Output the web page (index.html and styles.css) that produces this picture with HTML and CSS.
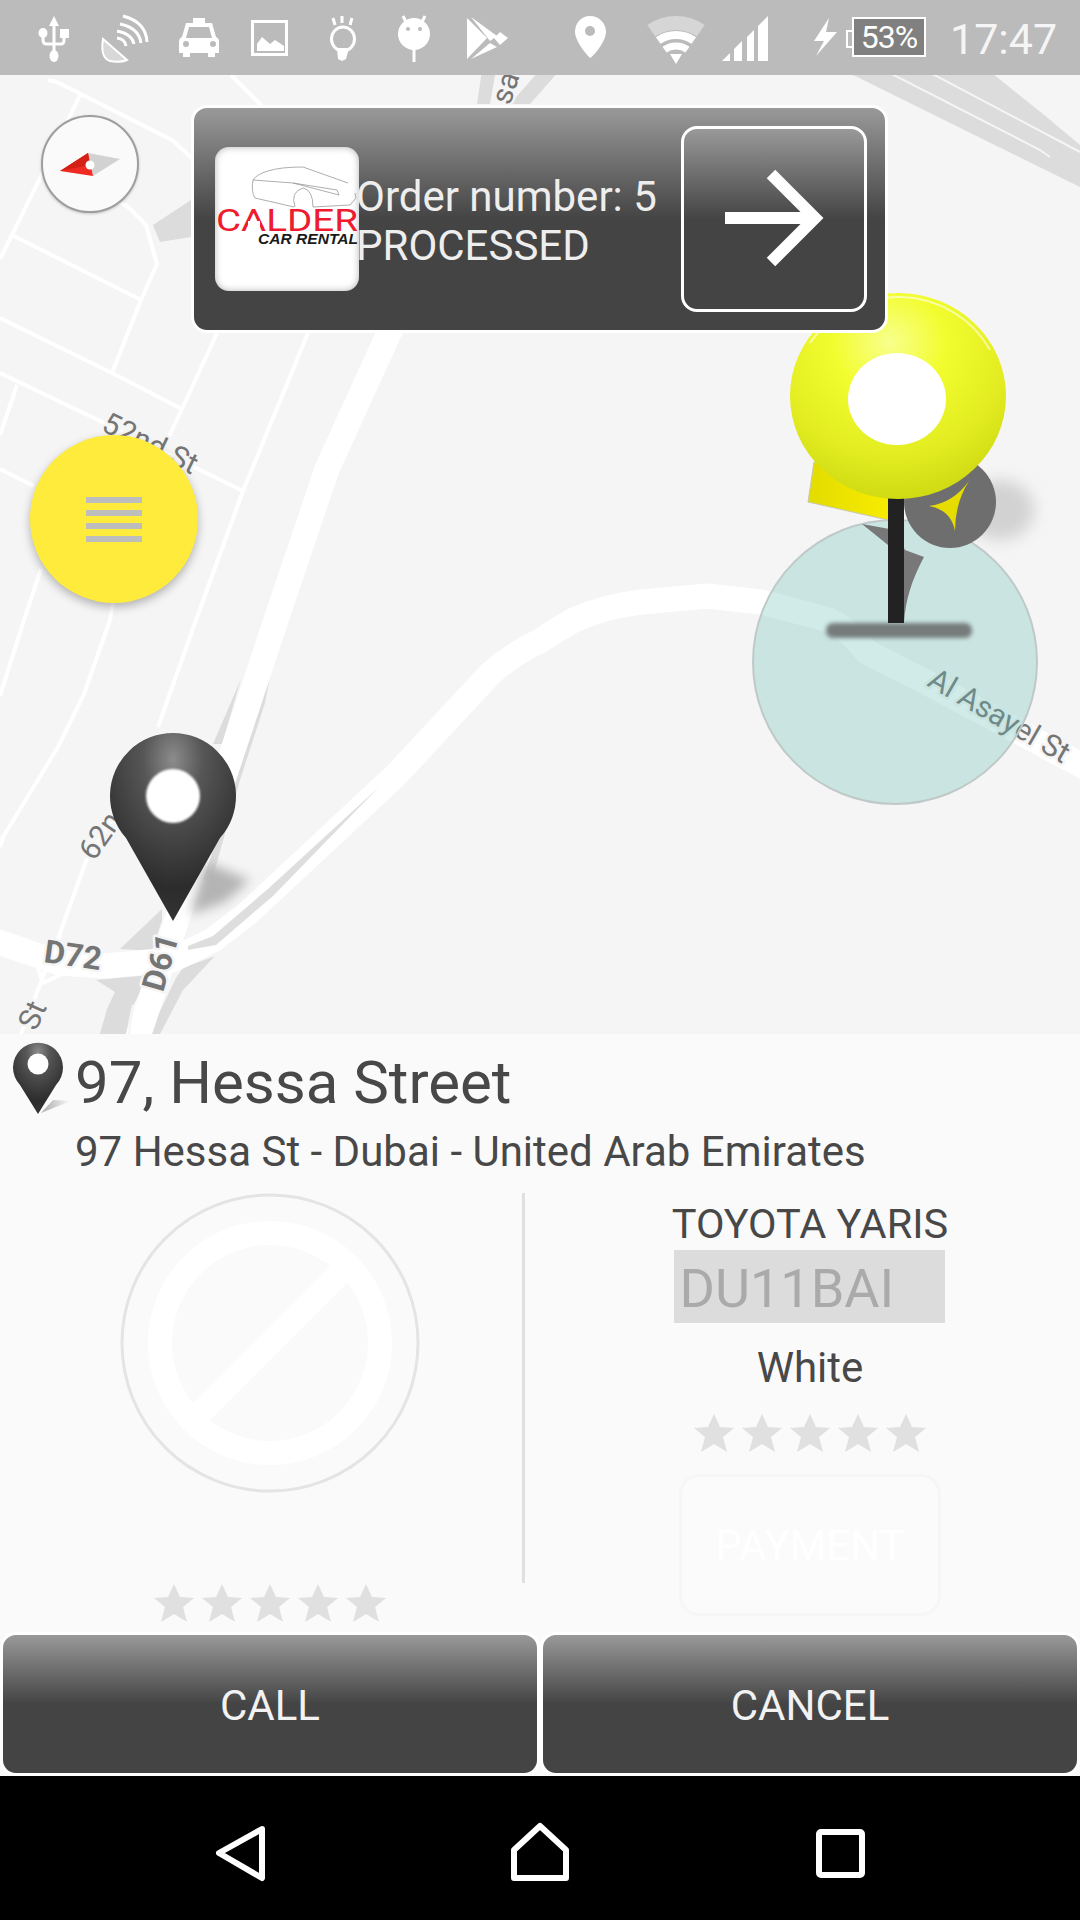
FILE: index.html
```html
<!DOCTYPE html>
<html lang="en">
<head>
<meta charset="utf-8">
<title>Order</title>
<link rel="stylesheet" href="styles.css">
</head>
<body>
<div class="app">
  <header class="status">
    <svg width="66" height="75" viewBox="30 0 66 75"><path class="wf" d="M54 16l5 10h-10z"/><path class="ws" d="M54 24V52M43 36V40Q43 44 47 44H61Q64 44 64 40V36"/><ellipse class="wf" cx="54" cy="56" rx="4.5" ry="6"/><ellipse class="wf" cx="43" cy="33" rx="4.5" ry="5"/><rect class="wf" x="60" y="29" width="9" height="9"/></svg>
    <svg width="76" height="75" viewBox="96 0 76 75"><path class="dish" d="M103 39Q100 58 110 61Q120 63 127 60Z"/><path class="ws" d="M123 16Q146 22 147 42M120 24Q139 28 141 43M117 31Q132 34 134 44M117 38Q125 39 126 46"/></svg>
    <svg width="73" height="75" viewBox="172 0 73 75"><path class="wf" d="M193 18H205V23H212L216 37Q219 38 219 42V53H215V57H208V53H190V57H183V53H179V42Q179 38 182 37L186 23H193Z"/><path class="gf" d="M189 27H209L212 38H186Z"/><circle class="gf" cx="186" cy="44" r="3"/><circle class="gf" cx="213" cy="44" r="3"/></svg>
    <svg width="79" height="75" viewBox="245 0 79 75"><rect class="wl" x="252.5" y="21.5" width="34" height="33"/><path class="wf" d="M257 50V44L262 37L270 44L275 40L284 46V51H257Z"/></svg>
    <svg width="68" height="75" viewBox="324 0 68 75"><path class="ws" d="M342 16V23M333 18L335 25M352 18L350 25"/><ellipse class="wl3" cx="343" cy="39" rx="11.5" ry="12"/><path class="wf" d="M337 48H349L346 59L342 61L338 59Z"/></svg>
    <svg width="68" height="75" viewBox="392 0 68 75"><path class="ws" d="M403 16L407 24M425 16L421 24M414 48V62"/><ellipse class="wf" cx="414" cy="34" rx="16" ry="16"/><circle class="gf" cx="408" cy="29" r="2"/><circle class="gf" cx="420" cy="29" r="2"/></svg>
    <svg width="108" height="75" viewBox="460 0 108 75"><path class="wf" d="M467 18L487 38L467 59ZM471 17L497 36L490 41ZM500 32L508 38L500 45L494 38ZM490 43L497 47L471 59Z"/></svg>
    <svg width="72" height="75" viewBox="568 0 72 75"><path class="wf" d="M590 16C599 16 606 23 606 32C606 40 596 54 590 58C584 52 575 40 575 32C575 23 581 16 590 16Z"/><circle class="gf" cx="590" cy="31" r="5"/></svg>
    <svg width="76" height="75" viewBox="640 0 76 75"><path class="wifi-back" d="M651.3 30.8A43 43 0 0 1 700.7 30.8"/><path class="wifi-a" d="M658.2 40.6A31 31 0 0 1 693.8 40.6"/><path class="wifi-b" d="M664.5 49.6A20 20 0 0 1 687.5 49.6"/><path class="wf" d="M670 54H682L676 64Z"/></svg>
    <svg width="92" height="75" viewBox="716 0 92 75"><path class="wf" d="M722 61L730 53V61ZM734 49V61H742V41ZM747 37V61H754V30ZM758 26V61H768V16Z"/></svg>
    <svg width="38" height="75" viewBox="808 0 38 75"><path class="wf" d="M829 18L814 41H824L816 56L837 32H826Z"/></svg>
    <div class="battery"><span>53%</span></div>
    <div class="clock">17:47</div>
  </header>

  <main class="map">
    <svg class="map-canvas" width="1080" height="959" viewBox="0 75 1080 959">
      <defs>
        <radialGradient id="pinGrad" cx="50%" cy="14%" r="85%">
          <stop offset="0" stop-color="#8c8c8c"/><stop offset=".28" stop-color="#565656"/><stop offset=".8" stop-color="#2c2c2c"/><stop offset="1" stop-color="#333"/>
        </radialGradient>
        <radialGradient id="ballGrad" cx="46%" cy="24%" r="85%">
          <stop offset="0" stop-color="#f8ff8c"/><stop offset=".3" stop-color="#f2fd30"/><stop offset=".65" stop-color="#e2ec20"/><stop offset="1" stop-color="#c8d30e"/>
        </radialGradient>
        <linearGradient id="flagGrad" x1="0" x2="1" y1="0" y2="0">
          <stop offset="0" stop-color="#e2dc00"/><stop offset="1" stop-color="#f8ec00"/>
        </linearGradient>
        <filter id="blur8" x="-50%" y="-50%" width="200%" height="200%"><feGaussianBlur stdDeviation="8"/></filter>
        <filter id="blur5" x="-50%" y="-50%" width="200%" height="200%"><feGaussianBlur stdDeviation="6"/></filter>
        <filter id="blur2" x="-20%" y="-100%" width="140%" height="300%"><feGaussianBlur stdDeviation="2"/></filter>
        <filter id="blur1" x="-30%" y="-30%" width="160%" height="160%"><feGaussianBlur stdDeviation="1.2"/></filter>
      </defs>

      <g class="tunnel">
        <polygon points="843,70 1080,187 1080,145 1043,114 988,70"/>
        <polygon points="153,225 191,200 191,237 160,242"/>
        <polygon points="477,104 482,70 496,70 490,104"/>
        <polygon points="510,104 540,70 560,70 530,104"/>
        <polygon points="270,677 265,703 240,780 212,880 200,880 240,745"/>
        <polygon points="241,679 213,744 222,744"/>
        <polygon points="120,949 162,909 162,920 152,951"/>
        <polygon points="100,1034 126,1034 131,1009 150,975 96,980 115,992 107,1009"/>
        <polygon points="149,1034 160,1034 183,990 215,956 183,968 176,978"/>
      </g>
      <path class="gap" d="M884 70L1040 150L1050 157M925 70L1080 152"/>

      <path class="street" d="M57 82L172 140L193 159M48 80L57 82M80 95L41 176L12 235L0 259M45 166L127 206L146 225L157 264L141 300L112 373M12 235L141 300M0 318L112 373L182 409M0 373L96 419L243 491M17 385L0 435M217 333L182 409L165 445M308 333L243 491L196 620L158 727M0 469L34 486M41 569L24 620L0 696M114 596L110 620L84 694L58 747L3 837L0 847M112 820L86 861L60 933L41 982L21 1034M60 933L56 955M38 968L43 983L60 975M231 75L262 106"/>
      <path class="road" d="M137 1040L276 620L327 469L389 333L420 270"/>
      <path class="road" d="M-10 939L59 963L103 966L172 960L213 940L248 913L396 775L490 674Q512 654 540 641Q556 630 574 620Q605 606 642 602L707 596L762 602L829 620Q850 630 867 652L926 682L1090 770"/>
      <polygon class="sliver" points="379,787 269,888 213,936 188,946 188,950 216,945 273,896"/>
      <path class="gap" d="M129 1034L133 1005"/>

      <text class="lbl" transform="translate(510 106) rotate(-72)">sa</text>
      <text class="lbl" transform="translate(100 430) rotate(26)">52nd St</text>
      <text class="lbl" transform="translate(94 862) rotate(-55)">62nd St</text>
      <text class="lbl-b" transform="translate(43 962) rotate(8)">D72</text>
      <text class="lbl-b" transform="translate(163 993) rotate(-74)">D61</text>
      <text class="lbl" transform="translate(36 1032) rotate(-66)">St</text>
      <text class="lbl" transform="translate(926 685) rotate(30)">Al Asayel St</text>

      <circle class="zone" cx="895" cy="662" r="142"/>

      <ellipse class="soft" cx="1000" cy="510" rx="34" ry="30" filter="url(#blur8)"/>
      <polygon class="flag" points="814,462 808,502 888,520 892,480"/>
      <circle class="ball-grey" cx="950" cy="502" r="46"/>
      <path class="spark" d="M969 481Q955 503 955 531Q951 510 929 506Q953 503 969 481Z"/>
      <path class="wedge" d="M862 524L888 545V622L904 622Q906 590 924 557L905 550L895 530Z"/>
      <rect class="base" x="826" y="623" width="146" height="15" rx="7" filter="url(#blur2)"/>
      <rect class="stick" x="888" y="495" width="16" height="128"/>
      <ellipse cx="898" cy="396" rx="108" ry="103" fill="url(#ballGrad)"/>
      <path class="rim" d="M810 343A104 99 0 0 1 990 350"/>
      <ellipse class="hole" cx="897" cy="399" rx="49" ry="46"/>

      <path class="pin-shadow" d="M205 862L250 880L225 902L190 915Z" filter="url(#blur5)"/>
      <path fill="url(#pinGrad)" d="M173 921L126 838A63 63 0 1 1 220 838Z"/>
      <circle class="hole" cx="173" cy="796" r="27" filter="url(#blur1)"/>
    </svg>

    <div class="compass">
      <svg width="60" height="26" viewBox="60 153 60 26"><polygon class="n-grey" points="88,153 120,159 93,176"/><polygon class="n-red" points="60,171 88,153 93,176"/><polygon class="n-red-dark" points="60,171 88,153 90,165"/><circle class="n-dot" cx="90" cy="165" r="4.5"/></svg>
    </div>

    <button class="fab"><span></span><span></span><span></span><span></span></button>

    <section class="banner">
      <div class="logo">
        <svg width="144" height="144" viewBox="215 147 144 144">
          <path class="car" d="M253 180Q257 174 268 171Q280 167 303 167L348 183M253 180Q251 192 255 198L294 207M253 180L293 183L337 190L339 195L293 183M295 207Q290 192 303 188Q313 190 313 207L350 205L356 198L355 193"/>
          <text class="brand" x="216" y="231" textLength="142" lengthAdjust="spacingAndGlyphs">CALDER</text>
          <rect class="brand-cut" x="248" y="221" width="12" height="7"/>
          <text class="brand-sub" x="258" y="244" textLength="100" lengthAdjust="spacingAndGlyphs">CAR RENTAL</text>
        </svg>
      </div>
      <div class="order"><div>Order number: 5</div><div>PROCESSED</div></div>
      <button class="go">
        <svg width="110" height="100" viewBox="720 170 110 100"><path class="arrow" d="M726 219H815M772 175L816 219L772 263"/></svg>
      </button>
    </section>
  </main>

  <section class="panel">
    <div class="place">
      <svg class="place-pin" width="64" height="80" viewBox="0 0 64 80">
        <defs><linearGradient id="sh" x1="0" x2="1"><stop offset="0" stop-color="#aaa"/><stop offset="1" stop-color="#fafafa"/></linearGradient></defs>
        <polygon points="28,73 40,60 58,61" fill="url(#sh)"/>
        <path fill="url(#pinGrad)" d="M25 74L7 45A25 25 0 1 1 43 45Z"/>
        <circle cx="25" cy="24" r="10.5" fill="#fff"/>
      </svg>
      <h1 class="title">97, Hessa Street</h1>
      <p class="addr">97 Hessa St - Dubai - United Arab Emirates</p>
    </div>

    <div class="details">
      <div class="driver">
        <svg width="300" height="300" viewBox="0 0 300 300"><circle class="av-ring" cx="150" cy="150" r="148"/><circle class="av-ban" cx="150" cy="150" r="110"/><path class="av-ban" d="M72 228L228 72"/></svg>
        <div class="stars driver-stars">
          <svg width="40" height="38" viewBox="0 0 40 38"><polygon points="20,0 26,13 40,14 29,23 33,38 20,30 7,38 11,23 0,14 14,13"/></svg>
          <svg width="40" height="38" viewBox="0 0 40 38"><polygon points="20,0 26,13 40,14 29,23 33,38 20,30 7,38 11,23 0,14 14,13"/></svg>
          <svg width="40" height="38" viewBox="0 0 40 38"><polygon points="20,0 26,13 40,14 29,23 33,38 20,30 7,38 11,23 0,14 14,13"/></svg>
          <svg width="40" height="38" viewBox="0 0 40 38"><polygon points="20,0 26,13 40,14 29,23 33,38 20,30 7,38 11,23 0,14 14,13"/></svg>
          <svg width="40" height="38" viewBox="0 0 40 38"><polygon points="20,0 26,13 40,14 29,23 33,38 20,30 7,38 11,23 0,14 14,13"/></svg>
        </div>
      </div>
      <div class="divider"></div>
      <div class="vehicle">
        <div class="model">TOYOTA YARIS</div>
        <div class="plate">DU11BAI</div>
        <div class="colour">White</div>
        <div class="stars vehicle-stars">
          <svg width="40" height="38" viewBox="0 0 40 38"><polygon points="20,0 26,13 40,14 29,23 33,38 20,30 7,38 11,23 0,14 14,13"/></svg>
          <svg width="40" height="38" viewBox="0 0 40 38"><polygon points="20,0 26,13 40,14 29,23 33,38 20,30 7,38 11,23 0,14 14,13"/></svg>
          <svg width="40" height="38" viewBox="0 0 40 38"><polygon points="20,0 26,13 40,14 29,23 33,38 20,30 7,38 11,23 0,14 14,13"/></svg>
          <svg width="40" height="38" viewBox="0 0 40 38"><polygon points="20,0 26,13 40,14 29,23 33,38 20,30 7,38 11,23 0,14 14,13"/></svg>
          <svg width="40" height="38" viewBox="0 0 40 38"><polygon points="20,0 26,13 40,14 29,23 33,38 20,30 7,38 11,23 0,14 14,13"/></svg>
        </div>
        <button class="payment">PAYMENT</button>
      </div>
    </div>

    <div class="actions">
      <button class="action">CALL</button>
      <button class="action">CANCEL</button>
    </div>
  </section>

  <nav class="navbar">
    <svg width="60" height="144" viewBox="210 1776 60 144"><path class="nav-ic" d="M262 1829L219 1853L262 1878Z"/></svg>
    <svg width="60" height="144" viewBox="510 1776 60 144"><path class="nav-ic" d="M540 1826L514 1850V1878H566V1850Z"/></svg>
    <svg width="60" height="144" viewBox="810 1776 60 144"><rect class="nav-ic" x="819" y="1832" width="43" height="43" rx="2"/></svg>
  </nav>
</div>
</body>
</html>
```
FILE: styles.css
```css
* { box-sizing: border-box; }
html, body { margin: 0; padding: 0; }
body { font-family: Roboto, "Liberation Sans", sans-serif; background: #000; }
button { font-family: inherit; padding: 0; cursor: pointer; }
.app { width: 1080px; height: 1920px; display: flex; flex-direction: column; overflow: hidden; }

/* status bar */
.status { flex: 0 0 75px; background: #bbb; display: flex; padding-left: 30px; }
.status svg { display: block; flex: none; }
.wf { fill: #fff; }
.gf { fill: #bbb; }
.ws { fill: none; stroke: #fff; stroke-width: 3; }
.wl { fill: none; stroke: #fff; stroke-width: 3; }
.wl3 { fill: none; stroke: #fff; stroke-width: 3; }
.dish { fill: #d8d8d8; stroke: #fff; stroke-width: 2; }
.wifi-back { fill: none; stroke: #d6d6d6; stroke-width: 14; }
.wifi-a { fill: none; stroke: #fff; stroke-width: 8; }
.wifi-b { fill: none; stroke: #fff; stroke-width: 7; }
.battery { position: relative; flex: none; width: 74px; height: 40px; margin: 17px 0 0 6px; background: #808080; border: 2px solid #fff; color: #fff; font-size: 32px; line-height: 37px; text-align: center; letter-spacing: -1px; }
.battery::before { content: ""; position: absolute; left: -8px; top: 11px; width: 6px; height: 14px; border: 2px solid #fff; border-right: 0; }
.clock { margin: 14px 0 0 24px; color: #f5f5f5; font-size: 43px; line-height: 50px; white-space: nowrap; }

/* map */
.map { position: relative; flex: 0 0 959px; background: #f5f5f5; overflow: hidden; }
.map-canvas { display: block; }
.tunnel polygon { fill: #dcdcdc; }
.gap { fill: none; stroke: #f5f5f5; stroke-width: 2; }
.sliver { fill: #dedede; }
.street { fill: none; stroke: #fff; stroke-width: 4; stroke-linejoin: round; }
.road { fill: none; stroke: #fff; stroke-width: 25; stroke-linejoin: round; }
.lbl, .lbl-b { paint-order: stroke; stroke: #f5f5f5; stroke-width: 5px; stroke-linejoin: round; fill: #757575; font-family: Roboto, sans-serif; }
.lbl { font-size: 30px; }
.lbl-b { font-size: 32px; font-weight: 700; }
.zone { fill: rgb(98, 188, 178); fill-opacity: .3; stroke: #bfc9c7; stroke-width: 2; }
.soft { fill: #d2d2d2; }
.pin-shadow { fill: #b4b4b4; }
.flag { fill: url(#flagGrad); stroke: #c8c8b0; stroke-width: 1; }
.ball-grey { fill: #6e6e6e; }
.spark { fill: #e6dc00; }
.wedge { fill: #787878; }
.base { fill: #767c7c; }
.stick { fill: #222; }
.hole { fill: #fff; }
.rim { fill: none; stroke: #fff; stroke-opacity: .55; stroke-width: 2; }

.compass { position: absolute; left: 41px; top: 40px; width: 98px; height: 98px; border-radius: 50%; background: #fafafa; border: 2px solid #9e9e9e; box-shadow: 0 1px 3px rgba(0,0,0,.2); display: flex; align-items: center; justify-content: center; }
.compass svg { display: block; margin: 3px 0 0 0; }
.n-red { fill: #ee2a22; }
.n-red-dark { fill: #d42015; }
.n-grey { fill: #d2d2d2; }
.n-dot { fill: #fff; }

.fab { position: absolute; left: 30px; top: 360px; width: 168px; height: 168px; border: 0; border-radius: 50%; background: #ffeb3b; box-shadow: 0 4px 10px rgba(0,0,0,.28); display: flex; flex-direction: column; align-items: center; justify-content: center; gap: 7px; }
.fab span { display: block; width: 56px; height: 6px; background: #bdbdbd; }

.banner { position: absolute; left: 191px; top: 30px; width: 697px; height: 228px; border: 3px solid #fff; border-radius: 16px; background: linear-gradient(#999, #444 50%, #444); display: flex; align-items: flex-start; }
.logo { flex: none; width: 144px; height: 144px; margin: 39px 0 0 21px; border-radius: 14px; background: #fff; box-shadow: inset 0 0 7px rgba(0,0,0,.3); }
.logo svg { display: block; overflow: visible; }
.car { fill: none; stroke: #999; stroke-width: .8; }
.brand { font-family: Roboto, sans-serif; font-size: 32px; fill: #ed1c2e; }
.brand-cut { fill: #fff; }
.brand-sub { font-family: "Liberation Sans", sans-serif; font-size: 14px; font-weight: 700; font-style: italic; fill: #1a1a1a; }
.order { margin: 64px 0 0 -3px; color: #eee; font-size: 42px; line-height: 49px; white-space: nowrap; }
.go { margin: 18px 18px 0 auto; flex: none; width: 186px; height: 186px; border: 3px solid #fff; border-radius: 16px; background: linear-gradient(#999, #444 50%, #444); display: flex; align-items: center; justify-content: center; }
.arrow { fill: none; stroke: #fff; stroke-width: 12; }

/* panel */
.panel { flex: 0 0 742px; background: #fafafa; display: flex; flex-direction: column; }
.place { display: grid; grid-template-columns: 75px 1fr; }
.place-pin { grid-row: 1 / span 2; display: block; margin: 6px 0 0 13px; overflow: visible; }
.title { margin: 16px 0 0; font-size: 60px; line-height: 66px; font-weight: 400; color: #484848; white-space: nowrap; }
.addr { margin: 12px 0 0; font-size: 42px; line-height: 48px; color: #484848; white-space: nowrap; }
.details { flex: 1; margin-top: 17px; display: flex; align-items: flex-start; }
.driver { flex: none; width: 522px; padding-left: 18px; display: flex; flex-direction: column; align-items: center; }
.driver > svg { display: block; }
.av-ring { fill: none; stroke: #e4e4e4; stroke-width: 3; }
.av-ban { fill: none; stroke: #fff; stroke-width: 24; }
.stars { display: flex; gap: 8px; }
.stars svg { display: block; }
.stars polygon { fill: #e0e0e0; }
.driver-stars { margin-top: 91px; }
.divider { flex: none; width: 3px; height: 390px; background: #e0e0e0; }
.vehicle { flex: 1; padding: 7px 0 0 15px; display: flex; flex-direction: column; align-items: center; }
.model, .colour { line-height: 48px; color: #484848; white-space: nowrap; }
.model { font-size: 41.5px; }
.colour { font-size: 42px; margin-top: 21px; }
.plate { width: 271px; height: 73px; margin: 2px 0 0 -2px; padding-left: 6px; background: #dcdcdc; color: #aaa; font-size: 54px; line-height: 78px; }
.vehicle-stars { margin-top: 22px; }
.payment { width: 262px; height: 142px; margin-top: 22px; border: 3px solid #f6f6f6; border-radius: 20px; background: #fbfbfb; color: #fff; font-size: 42px; }
.actions { flex: 0 0 144px; display: flex; }
.action { flex: 1; border: 3px solid #fff; border-radius: 16px; background: linear-gradient(#999, #444 50%, #444); color: #f2f2f2; font-size: 42px; padding-top: 2px; }

/* nav */
.navbar { flex: 1; background: #000; display: flex; gap: 240px; padding-left: 210px; }
.navbar svg { display: block; }
.nav-ic { fill: none; stroke: #fff; stroke-width: 6; stroke-linejoin: round; }
```
